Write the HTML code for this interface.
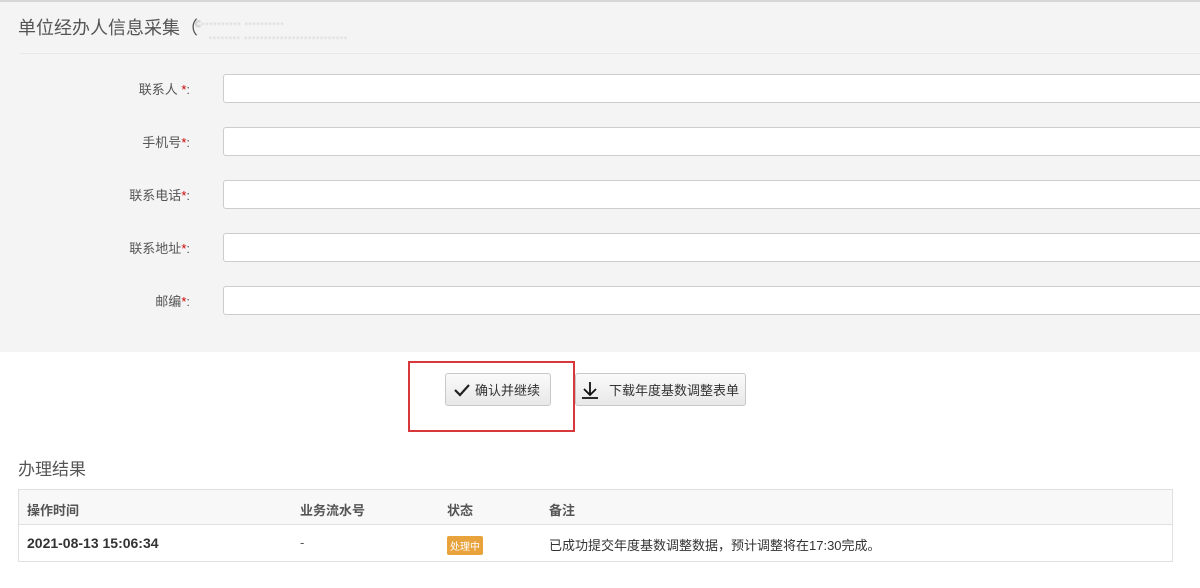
<!DOCTYPE html>
<html><head><meta charset="utf-8"><style>
*{box-sizing:border-box;margin:0;padding:0}
body{width:1200px;height:588px;overflow:hidden;background:#fff;font-family:"Liberation Sans","Noto Sans CJK SC",sans-serif;color:#333;position:relative}
.panel{position:absolute;left:0;top:0;width:1200px;height:352px;background:#f4f4f4;border-top:2px solid #d6d6d6}
.title{position:absolute;left:18px;top:12px;font-size:18px;color:#555}
.blur{position:absolute;left:195px;top:14px;width:340px;height:24px;color:#aaa;font-size:12px;filter:blur(0.8px);line-height:14px}
.hr{position:absolute;left:20px;top:51px;width:1180px;height:1px;background:#e8e8e8}
.lab{position:absolute;right:1010px;font-size:13px;color:#555;text-align:right}
.lab b{color:#c00;font-weight:normal}
.inp{position:absolute;left:223px;width:990px;height:29px;background:#fff;border:1px solid #ccc;border-radius:3px}
.btn{position:absolute;top:373px;height:33px;border:1px solid #c8c8c8;border-radius:3px;background:linear-gradient(#fafafa,#e8e8e8);font-size:13px;color:#333;display:flex;align-items:center}
.red{position:absolute;left:408px;top:361px;width:167px;height:71px;border:2px solid #d9383a}
.h2{position:absolute;left:18px;top:455px;font-size:17px;color:#555}
.tbl{position:absolute;left:18px;top:489px;width:1155px;height:73px;border:1px solid #e0e0e0}
.hd{position:absolute;left:0;top:0;width:100%;height:35px;background:#f8f8f8;border-bottom:1px solid #e0e0e0}
.c{position:absolute;font-size:13px}
</style></head><body>
<div class="panel">
<div class="title">单位经办人信息采集（</div>
<div class="blur">c·········· ··········<br>&nbsp;&nbsp;&nbsp;&nbsp;········ ··························</div>
<div class="hr"></div>
<div class="lab" style="top:77px">联系人 <b>*</b>:</div><div class="inp" style="top:72px"></div>
<div class="lab" style="top:130px">手机号<b>*</b>:</div><div class="inp" style="top:125px"></div>
<div class="lab" style="top:183px">联系电话<b>*</b>:</div><div class="inp" style="top:178px"></div>
<div class="lab" style="top:236px">联系地址<b>*</b>:</div><div class="inp" style="top:231px"></div>
<div class="lab" style="top:289px">邮编<b>*</b>:</div><div class="inp" style="top:284px"></div>
</div>
<div class="btn" style="left:445px;width:106px;padding-left:7px"><svg width="18" height="14" viewBox="0 0 18 14"><path d="M2 7l5 5L16 2" fill="none" stroke="#222" stroke-width="2.2"/></svg><span style="margin-left:4px">确认并继续</span></div>
<div class="btn" style="left:575px;width:171px;padding-left:4px"><svg width="20" height="18" viewBox="0 0 20 18"><path d="M10 1v12M4 8l6 6 6-6M2 17h16" fill="none" stroke="#111" stroke-width="1.8"/></svg><span style="margin-left:9px">下载年度基数调整表单</span></div>
<div class="red"></div>
<div class="h2">办理结果</div>
<div class="tbl"><div class="hd"></div>
<div class="c" style="left:8px;top:10px;font-weight:bold;color:#555">操作时间</div>
<div class="c" style="left:281px;top:10px;font-weight:bold;color:#555">业务流水号</div>
<div class="c" style="left:428px;top:10px;font-weight:bold;color:#555">状态</div>
<div class="c" style="left:530px;top:10px;font-weight:bold;color:#555">备注</div>
<div class="c" style="left:8px;top:45px;font-weight:bold;font-size:14px">2021-08-13 15:06:34</div>
<div class="c" style="left:281px;top:45px;color:#555">-</div>
<div class="c" style="left:428px;top:46px;background:#e8a33c;color:#fff;font-size:10px;padding:2px 3px;border-radius:2px">处理中</div>
<div class="c" style="left:530px;top:45px;color:#333">已成功提交年度基数调整数据，预计调整将在17:30完成。</div>
</div>
</body></html>
